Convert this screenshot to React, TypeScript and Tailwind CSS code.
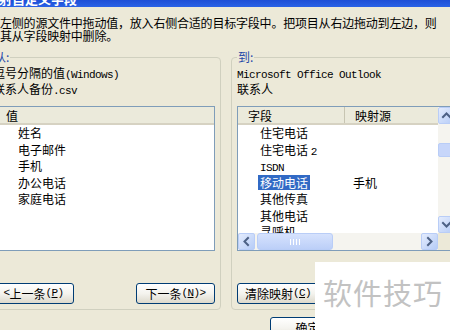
import React from 'react';

const Mono: React.FC<{ children: React.ReactNode }> = ({ children }) => (
  <span className="font-['Liberation_Mono',monospace] text-[11px] tracking-[-0.6px]">{children}</span>
);

const XpButton: React.FC<{ children: React.ReactNode; className?: string }> = ({ children, className = '' }) => (
  <button
    className={`flex items-center justify-center rounded-[3px] border border-[#003c74] bg-linear-to-b from-white via-[#f4f3ee] to-[#dcd9cc] text-[12px] leading-none text-black ${className}`}
  >
    {children}
  </button>
);

type Dir = 'up' | 'down' | 'left' | 'right';

const ScrollArrow: React.FC<{ dir: Dir }> = ({ dir }) => {
  const paths: Record<Dir, string> = {
    up: 'M5 10 L8.5 6.5 L12 10',
    down: 'M5 7 L8.5 10.5 L12 7',
    left: 'M10 5 L6.5 8.5 L10 12',
    right: 'M7 5 L10.5 8.5 L7 12',
  };
  return (
    <div className="h-[17px] w-[17px] shrink-0 rounded-[2px] border border-[#b9cdf7] bg-linear-to-br from-[#e4ecfd] to-[#b6ccf7]">
      <svg width="15" height="15" viewBox="1 1 15 15">
        <path d={paths[dir]} fill="none" stroke="#4d6185" strokeWidth="2" strokeLinecap="square" />
      </svg>
    </div>
  );
};

const fieldRows = ['住宅电话', '住宅电话 2', 'ISDN', '移动电话', '其他传真', '其他电话', '寻呼机'];
const valueRows = ['姓名', '电子邮件', '手机', '办公电话', '家庭电话'];

export default function App() {
  return (
    <div className="relative h-[330px] w-[450px] overflow-hidden bg-[#ece9d8] font-['Noto_Sans_CJK_SC',sans-serif] text-[12px] text-black">
      {/* title bar, mostly cropped */}
      <div className="h-[7px] overflow-hidden bg-linear-to-b from-[#1e4fd6] to-[#2a62e6]">
        <div className="ml-[-14px] mt-[-8px] whitespace-nowrap text-[13px] font-bold leading-[13px] text-white">映射自定义字段</div>
      </div>

      {/* instructions */}
      <div className="mt-[9px] whitespace-nowrap leading-[13px] tracking-[-0.2px]">
        左侧的源文件中拖动值，放入右侧合适的目标字段中。把项目从右边拖动到左边，则
        <br />
        其从字段映射中删除。
      </div>

      <div className="ml-[-13px] mt-[8px] flex gap-[10px]">
        {/* from */}
        <fieldset className="w-[234px] shrink-0 rounded-[4px] border border-[#d0d0bf] px-[5px] pb-[5px] pt-[1px]">
          <legend className="px-[1px] text-[12px] leading-[14px] text-[#1f47a8]">从:</legend>
          <div className="h-[16px] leading-[16px] whitespace-nowrap">
            逗号分隔的值<Mono>(Windows)</Mono>
          </div>
          <div className="h-[16px] leading-[16px] whitespace-nowrap">
            联系人备份<Mono>.csv</Mono>
          </div>
          <div className="mt-[9px] h-[145px] border border-[#7f9db9] bg-white">
            <div className="h-[18px] border-b-2 border-[#d6d2c2] bg-[#ebeadb] pl-[12px] leading-[17px]">值</div>
            {valueRows.map((v) => (
              <div key={v} className="h-[16.5px] pl-[24px] leading-[16.5px]">{v}</div>
            ))}
          </div>
          <div className="mt-[32px] flex justify-between">
            <XpButton className="h-[21px] w-[81px]">
              <Mono>&lt;</Mono>上一条<Mono>(<u>P</u>)</Mono>
            </XpButton>
            <XpButton className="h-[21px] w-[79px]">
              下一条<Mono>(<u>N</u>)&gt;</Mono>
            </XpButton>
          </div>
        </fieldset>

        {/* to */}
        <fieldset className="w-[250px] shrink-0 rounded-[4px] border border-[#d0d0bf] px-[5px] pb-[5px] pt-[1px]">
          <legend className="px-[1px] text-[12px] leading-[14px] text-[#1f47a8]">到:</legend>
          <div className="h-[16px] leading-[16px] whitespace-nowrap">
            <Mono>Microsoft Office Outlook</Mono>
          </div>
          <div className="h-[16px] leading-[16px] whitespace-nowrap">联系人</div>
          <div className="mt-[9px] flex h-[145px] w-[219px] flex-col border border-[#7f9db9] bg-white">
            <div className="flex min-h-0 flex-1">
              <div className="flex-1 overflow-hidden">
                <div className="flex h-[18px] border-b-2 border-[#d6d2c2] bg-[#ebeadb] leading-[17px]">
                  <div className="w-[107px] shrink-0 border-r border-[#c7c5b2] pl-[10px]">字段</div>
                  <div className="pl-[10px]">映射源</div>
                </div>
                {fieldRows.map((f) => (
                  <div key={f} className="flex h-[16.5px] leading-[16.5px] whitespace-nowrap">
                    <div className="w-[107px] shrink-0 pl-[22px]">
                      {f === '移动电话' ? (
                        <span className="ml-[-2px] inline-block h-[15px] bg-[#316ac5] px-[2px] leading-[15px] text-white">{f}</span>
                      ) : f === 'ISDN' ? (
                        <Mono>ISDN</Mono>
                      ) : f === '住宅电话 2' ? (
                        <>
                          住宅电话 <Mono>2</Mono>
                        </>
                      ) : (
                        f
                      )}
                    </div>
                    {f === '移动电话' && <div className="pl-[8px]">手机</div>}
                  </div>
                ))}
              </div>
              {/* vertical scrollbar */}
              <div className="flex w-[17px] shrink-0 flex-col bg-[#f5f4ef]">
                <ScrollArrow dir="up" />
                <div className="mt-[19px] h-[14px] rounded-[2px] border border-[#b9cdf7] bg-[#c7d6fa]" />
                <div className="flex-1" />
                <ScrollArrow dir="down" />
              </div>
            </div>
            {/* horizontal scrollbar */}
            <div className="flex h-[17px] shrink-0">
              <div className="flex flex-1 bg-[#f5f4ef]">
                <ScrollArrow dir="left" />
                <div className="ml-[2px] flex h-[17px] w-[76px] items-center justify-center gap-[2px] rounded-[3px] border border-[#b9cdf7] bg-linear-to-b from-[#d6e2fd] to-[#bccff8]">
                  <span className="h-[6px] w-[1px] bg-white" />
                  <span className="h-[6px] w-[1px] bg-white" />
                  <span className="h-[6px] w-[1px] bg-white" />
                  <span className="h-[6px] w-[1px] bg-white" />
                </div>
                <div className="flex-1" />
                <ScrollArrow dir="right" />
              </div>
              <div className="w-[17px] shrink-0 bg-[#ece9d8]" />
            </div>
          </div>
          <div className="mt-[32px] flex">
            <XpButton className="h-[21px] w-[82px]">
              清除映射<Mono>(<u>C</u>)</Mono>
            </XpButton>
          </div>
        </fieldset>
      </div>

      <div className="mt-[7px] pl-[270px]">
        <XpButton className="h-[23px] w-[75px] items-start pt-[4px]">确定</XpButton>
      </div>

      {/* watermark */}
      <div className="absolute left-[315px] top-[262px] h-[68px] w-[135px] bg-white pl-[8px] pt-[16px]">
        <div className="whitespace-nowrap text-[29px] leading-none tracking-[1px] text-[#c2c2c2]">软件技巧</div>
      </div>
    </div>
  );
}
